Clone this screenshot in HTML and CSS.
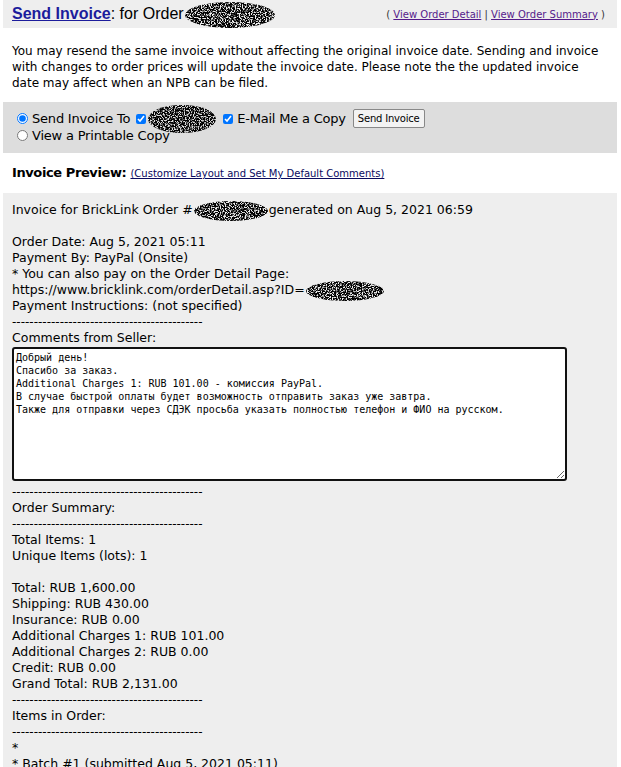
FILE: index.html
```html
<!DOCTYPE html>
<html lang="en">
<head>
    <meta charset="UTF-8">
    <title>Send Invoice</title>
    <link rel="stylesheet" href="styles.css">
</head>
<body>

<div class="page">
    <div class="topbar">
        <div class="title">
            <a href="#" class="title-link">Send Invoice</a>: for Order<svg class="redact" width="92" height="28" viewBox="0 0 92 28"><defs><filter id="nz1"><feTurbulence type="fractalNoise" baseFrequency="0.8" numOctaves="2" seed="3"/><feColorMatrix type="matrix" values="0 0 0 0 0  0 0 0 0 0  0 0 0 0 0  6 0 0 0 -2.2"/></filter><clipPath id="cl1"><ellipse cx="46" cy="14" rx="45" ry="13"/></clipPath></defs><rect width="92" height="28" filter="url(#nz1)" clip-path="url(#cl1)"/></svg>
        </div>
        <div class="toplinks">( <a href="#">View Order Detail</a> | <a href="#">View Order Summary</a> )</div>
    </div>

    <p class="note">You may resend the same invoice without affecting the original invoice date. Sending and invoice with changes to order prices will update the invoice date. Please note the the updated invoice date may affect when an NPB can be filed.</p>

    <div class="options">
        <div class="opt-row">
            <input type="radio" name="mode" checked> Send Invoice To
            <input type="checkbox" checked class="chk chk-first"><svg class="redact redact-mail" width="70" height="30" viewBox="0 0 70 30"><defs><filter id="nz2"><feTurbulence type="fractalNoise" baseFrequency="0.8" numOctaves="2" seed="8"/><feColorMatrix type="matrix" values="0 0 0 0 0  0 0 0 0 0  0 0 0 0 0  6 0 0 0 -2.2"/></filter><clipPath id="cl2"><ellipse cx="35" cy="15" rx="34" ry="14"/></clipPath></defs><rect width="70" height="30" filter="url(#nz2)" clip-path="url(#cl2)"/></svg>
            <input type="checkbox" checked class="chk"> E-Mail Me a Copy
            <button class="send-btn">Send Invoice</button>
        </div>
        <div class="opt-row">
            <input type="radio" name="mode"> View a Printable Copy
        </div>
    </div>

    <div class="preview-title">
        <b>Invoice Preview:</b> <a href="#" class="small-link">(Customize Layout and Set My Default Comments)</a>
    </div>

    <div class="invoice">
        <div>Invoice for BrickLink Order #<svg class="redact" width="76" height="22" viewBox="0 0 76 22"><defs><filter id="nz3"><feTurbulence type="fractalNoise" baseFrequency="0.8" numOctaves="2" seed="5"/><feColorMatrix type="matrix" values="0 0 0 0 0  0 0 0 0 0  0 0 0 0 0  6 0 0 0 -2.2"/></filter><clipPath id="cl3"><ellipse cx="38" cy="11" rx="37" ry="10"/></clipPath></defs><rect width="76" height="22" filter="url(#nz3)" clip-path="url(#cl3)"/></svg>generated on Aug 5, 2021 06:59</div>
        <div class="blank"></div>
        <div>Order Date: Aug 5, 2021 05:11</div>
        <div>Payment By: PayPal (Onsite)</div>
        <div>* You can also pay on the Order Detail Page:</div>
        <div>https://www.bricklink.com/orderDetail.asp?ID=<svg class="redact" width="80" height="22" viewBox="0 0 80 22"><defs><filter id="nz4"><feTurbulence type="fractalNoise" baseFrequency="0.8" numOctaves="2" seed="11"/><feColorMatrix type="matrix" values="0 0 0 0 0  0 0 0 0 0  0 0 0 0 0  6 0 0 0 -2.2"/></filter><clipPath id="cl4"><ellipse cx="40" cy="11" rx="39" ry="10"/></clipPath></defs><rect width="80" height="22" filter="url(#nz4)" clip-path="url(#cl4)"/></svg></div>
        <div>Payment Instructions: (not specified)</div>
        <div class="dash">--------------------------------------------</div>
        <div>Comments from Seller:</div>
        <textarea class="comments">Добрый день!
Спасибо за заказ.
Additional Charges 1: RUB 101.00 - комиссия PayPal.
В случае быстрой оплаты будет возможность отправить заказ уже завтра.
Также для отправки через СДЭК просьба указать полностью телефон и ФИО на русском.</textarea>
        <div class="dash">--------------------------------------------</div>
        <div>Order Summary:</div>
        <div class="dash">--------------------------------------------</div>
        <div>Total Items: 1</div>
        <div>Unique Items (lots): 1</div>
        <div class="blank"></div>
        <div>Total: RUB 1,600.00</div>
        <div>Shipping: RUB 430.00</div>
        <div>Insurance: RUB 0.00</div>
        <div>Additional Charges 1: RUB 101.00</div>
        <div>Additional Charges 2: RUB 0.00</div>
        <div>Credit: RUB 0.00</div>
        <div>Grand Total: RUB 2,131.00</div>
        <div class="dash">--------------------------------------------</div>
        <div>Items in Order:</div>
        <div class="dash">--------------------------------------------</div>
        <div>*</div>
        <div>* Batch #1 (submitted Aug 5, 2021 05:11)</div>
    </div>
</div>

</body>
</html>
```

FILE: styles.css
```css
* {
    box-sizing: border-box;
}

body {
    margin: 0;
    background-color: #fff;
    color: #000;
    font-family: 'DejaVu Sans', Verdana, sans-serif;
    font-size: 13px;
}

.page {
    padding: 0 4px 0 3px;
}

.topbar {
    display: flex;
    justify-content: space-between;
    align-items: center;
    height: 28px;
    background-color: #eee;
    padding: 0 12px 0 9px;
}

.title {
    font-family: 'Liberation Sans', Arial, sans-serif;
    font-size: 16px;
}

.title-link {
    font-weight: bold;
    color: #1c1c9c;
}

.toplinks {
    font-size: 10px;
    color: #333;
}

.toplinks a {
    color: #551a8b;
}

.note {
    margin: 0;
    padding: 15px 9px 11px;
    font-size: 12px;
    line-height: 16px;
}

.options {
    background-color: #ddd;
    padding: 8px 9px 9px;
    font-size: 13px;
    letter-spacing: -0.2px;
}

.opt-row {
    display: flex;
    align-items: center;
    height: 17px;
    white-space: nowrap;
}

.opt-row input[type=radio] {
    margin: 0 4px 0 5px;
    width: 11px;
    height: 11px;
}

.chk {
    margin: 0 4px 0 6px;
    width: 10px;
    height: 10px;
}

.chk-first {
    margin-right: 1px;
}

.send-btn {
    margin-left: 7px;
    font-family: 'DejaVu Sans', Verdana, sans-serif;
    font-size: 10px;
    letter-spacing: -0.2px;
    padding: 0 4px;
    background-color: #f3f3f3;
    border: 1px solid #888;
    border-radius: 2px;
    height: 19px;
    white-space: nowrap;
    color: #000;
}

.preview-title {
    padding: 12px 9px 8px;
    font-size: 13px;
    height: 40px;
}

.preview-title b {
    letter-spacing: -0.4px;
}

.small-link {
    font-size: 10px;
    color: #0a0a5e;
}

.invoice {
    background-color: #eee;
    padding: 9px 9px 0;
    line-height: 16px;
    font-size: 12.5px;
}

.blank {
    height: 16px;
}

.dash {
    font-size: 12px;
}

.comments {
    display: block;
    width: 555px;
    height: 134px;
    margin: 1px 0 3px 0;
    padding: 2px 2px;
    border: 2px solid #111;
    border-radius: 3px;
    font-family: 'DejaVu Sans Mono', monospace;
    font-size: 10px;
    line-height: 13px;
    resize: both;
    background-color: #fff;
    color: #000;
}

.redact {
    vertical-align: middle;
    margin: -6px 0;
}

.redact-mail {
    margin: -8px 0;
}
```
